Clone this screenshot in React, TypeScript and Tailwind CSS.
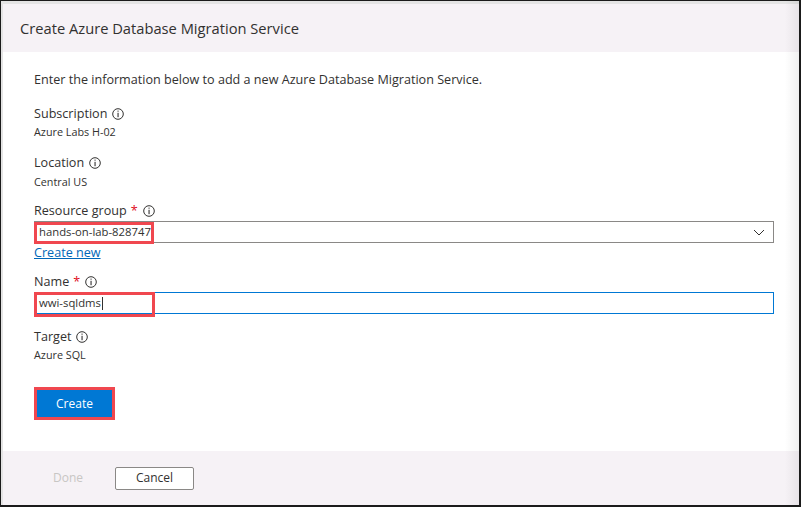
import React from "react";

const font = { fontFamily: '"Open Sans", "Noto Sans", sans-serif' };

const InfoIcon: React.FC = () => (
  <svg width="12" height="12" viewBox="0 0 12 12" className="ml-[5px] inline-block">
    <circle cx="6" cy="6" r="5.3" fill="none" stroke="#323130" strokeWidth="1" />
    <rect x="5.5" y="2.6" width="1.1" height="1.1" fill="#323130" />
    <rect x="5.5" y="4.8" width="1.1" height="4.4" fill="#323130" />
  </svg>
);

const Label: React.FC<{ text: string; required?: boolean }> = ({ text, required }) => (
  <div className="flex items-center text-[12.6px] leading-[18px] text-[#323130]">
    <span>{text}</span>
    {required && <span className="ml-[4px] text-[#e00b1c]">*</span>}
    <InfoIcon />
  </div>
);

const App: React.FC = () => {
  return (
    <div
      className="relative flex h-[507px] w-[801px] flex-col overflow-hidden border-t border-l border-r-2 border-b-2 border-[#1b1b1b] bg-white"
      style={font}
    >
      <div className="flex flex-1 flex-col border-t-[3px] border-l-2 border-[#e4e4e4]">
        {/* header */}
        <div className="flex h-[48px] items-center bg-[#f6f2f6] pl-[17px]">
          <h1 className="text-[14.7px] text-[#323130]">Create Azure Database Migration Service</h1>
        </div>

        {/* body */}
        <div className="flex-1 bg-white pl-[31px] pr-[25px] pt-[19px]">
          <p className="text-[12.6px] leading-[18px] text-[#323130]">
            Enter the information below to add a new Azure Database Migration Service.
          </p>

          <div className="mt-[16px]">
            <Label text="Subscription" />
            <div className="mt-[1px] text-[10.8px] leading-[16px] text-[#323130]">Azure Labs H-02</div>
          </div>

          <div className="mt-[14px]">
            <Label text="Location" />
            <div className="mt-[2px] text-[10.8px] leading-[16px] text-[#323130]">Central US</div>
          </div>

          <div className="mt-[12px]">
            <Label text="Resource group" required />
            <div className="relative mt-[1px] flex h-[22px] items-center border border-[#8a8886] pl-[4px]">
              <span className="text-[11.3px] text-[#323130]">hands-on-lab-828747</span>
              <svg width="12" height="7" viewBox="0 0 12 7" className="ml-auto mr-[8px]">
                <path d="M1 1 L6 6 L11 1" fill="none" stroke="#323130" strokeWidth="1" />
              </svg>
              <div className="absolute left-[-1px] top-0 h-[22px] w-[120px] border-[3px] border-[#f0474f]" />
            </div>
            <a href="#" className="mt-[1px] block w-fit text-[12.6px] leading-[18px] text-[#0067b8] underline">
              Create new
            </a>
          </div>

          <div className="mt-[11px]">
            <Label text="Name" required />
            <div className="relative mt-[1px] flex h-[22px] items-center border border-[#0078d4] pl-[4px]">
              <span className="text-[11.3px] text-[#323130]">wwi-sqldms</span>
              <span className="ml-[1px] h-[13px] w-px bg-[#323130]" />
              <div className="absolute left-[-1px] top-[-1px] h-[25px] w-[121px] border-[3px] border-[#f0474f]" />
            </div>
          </div>

          <div className="mt-[14px]">
            <Label text="Target" />
            <div className="mt-[1px] text-[10.8px] leading-[16px] text-[#323130]">Azure SQL</div>
          </div>

          <div className="mt-[24px] w-fit border-[3px] border-[#f0474f]">
            <button className="block h-[27px] w-[75px] bg-[#0078d4] text-[12px] text-white">Create</button>
          </div>
        </div>

        {/* footer */}
        <div className="flex h-[54px] items-center gap-[7px] bg-[#f6f2f6] pl-[25px]">
          <button className="h-[23px] w-[80px] text-[12px] text-[#c8c6c4]">Done</button>
          <button className="h-[23px] w-[79px] rounded-[2px] border border-[#8a8886] bg-white text-[12px] text-[#323130]">
            Cancel
          </button>
        </div>
      </div>

      <div className="pointer-events-none absolute right-0 top-0 h-full w-[14px] bg-gradient-to-r from-transparent to-black/[0.06]" />
    </div>
  );
};

export default App;
